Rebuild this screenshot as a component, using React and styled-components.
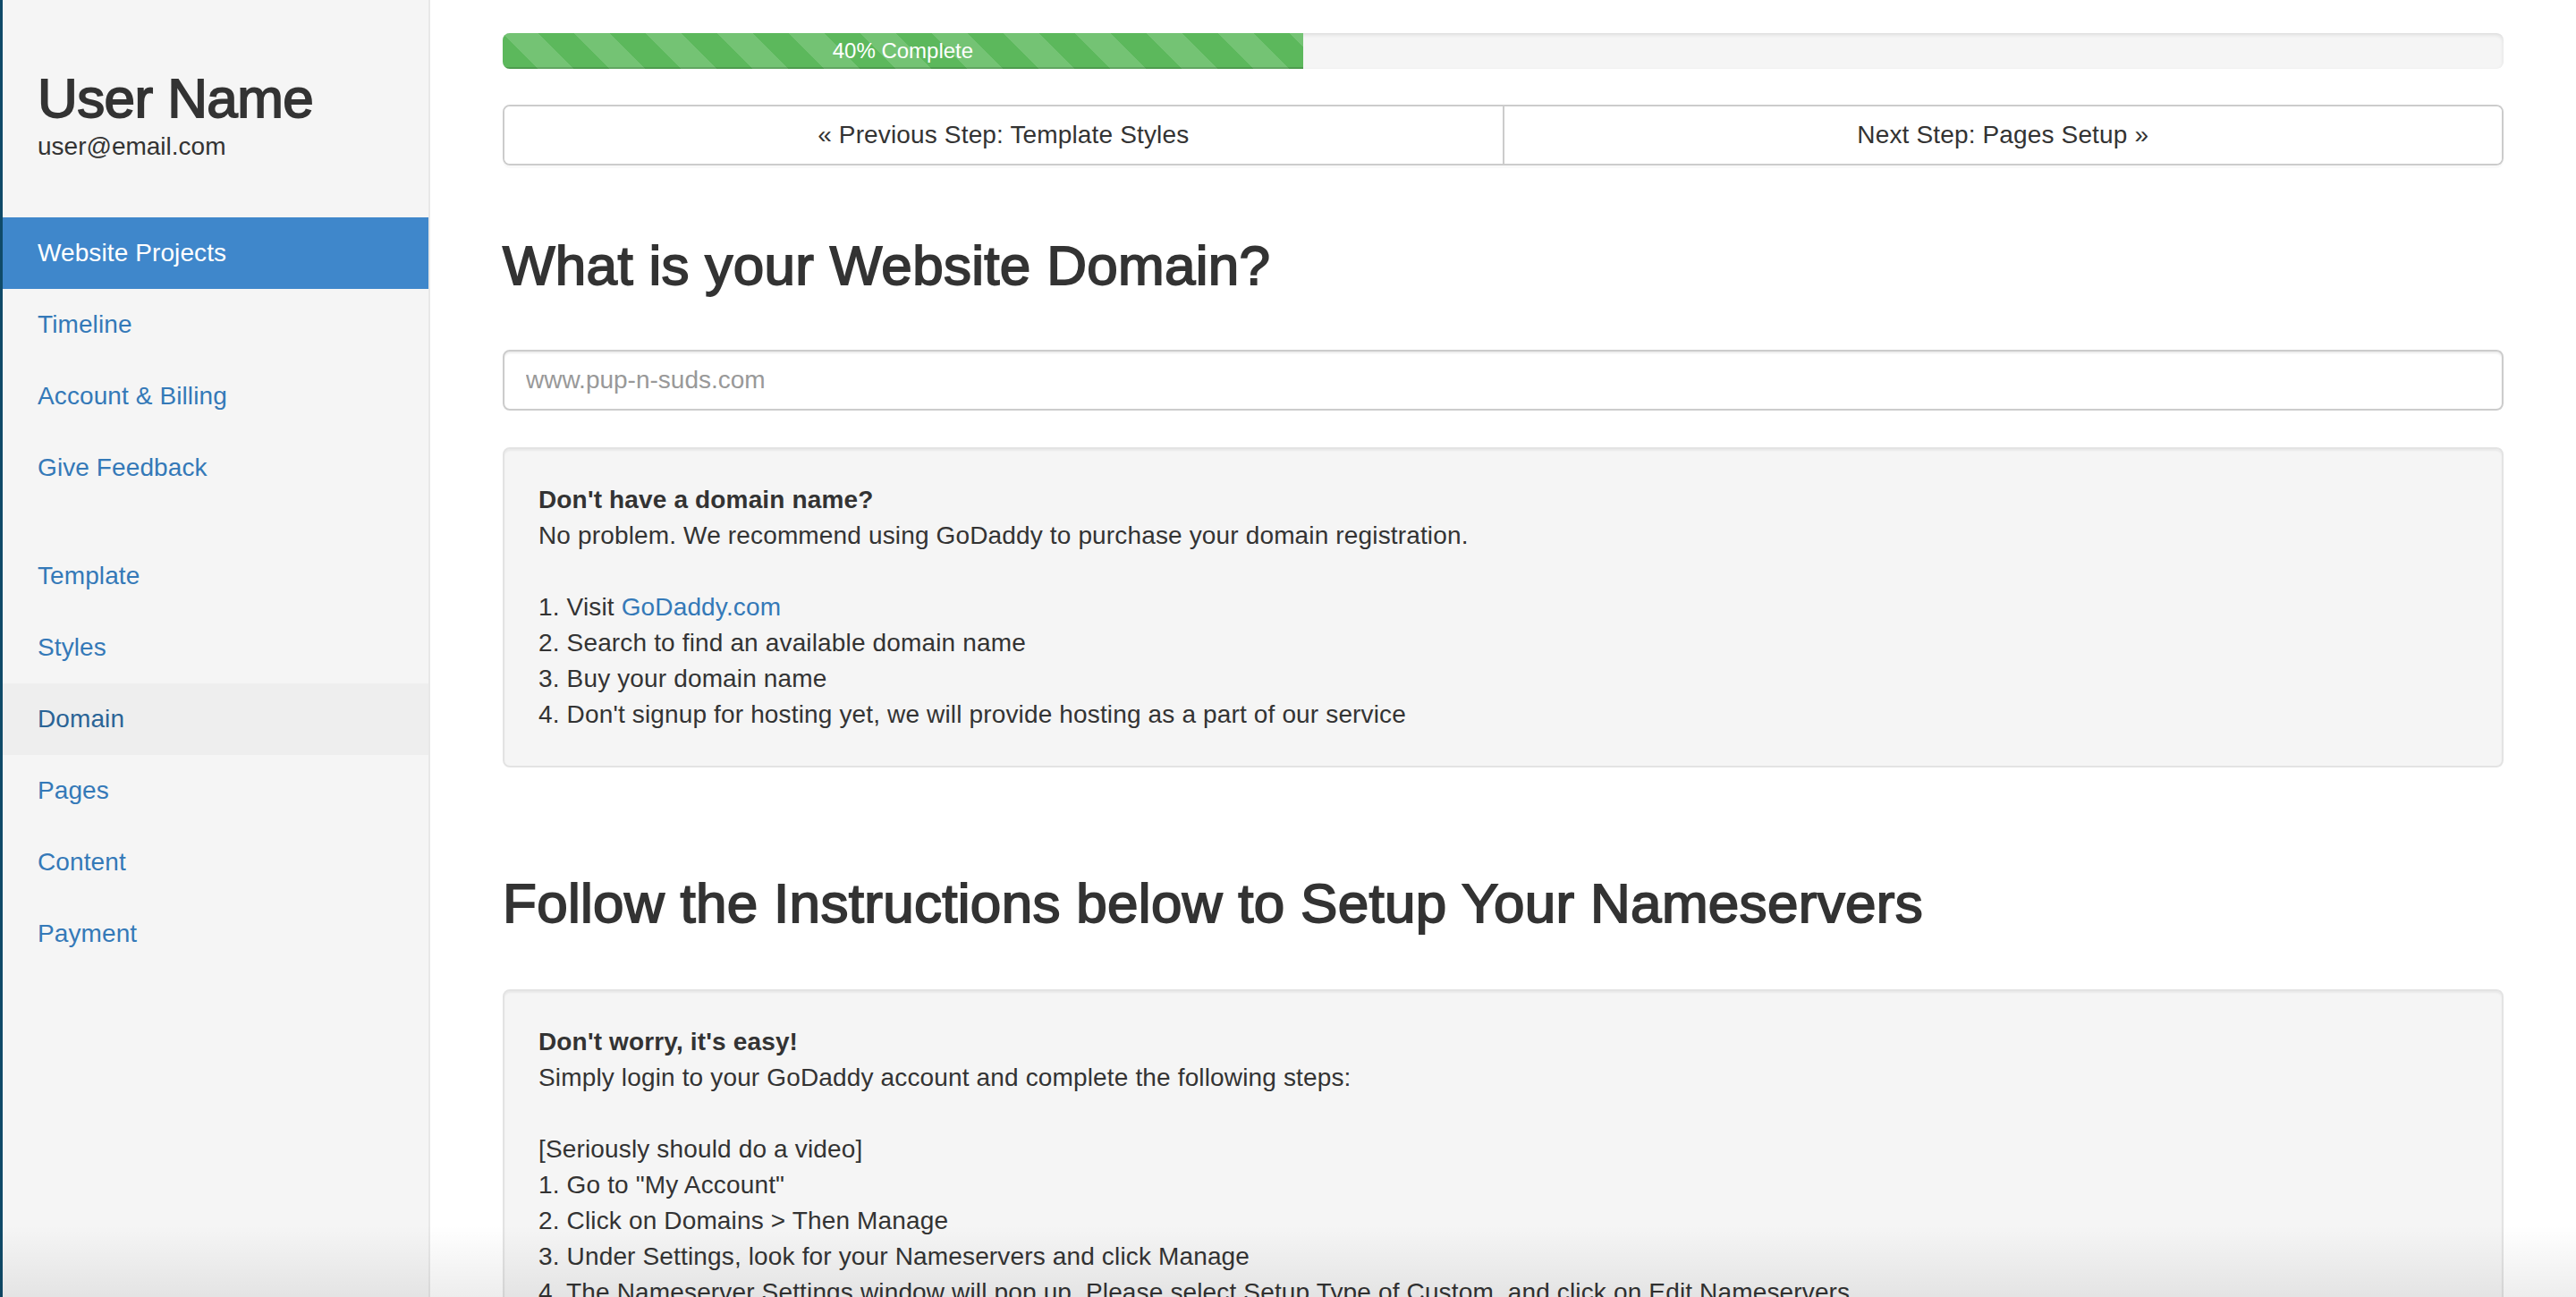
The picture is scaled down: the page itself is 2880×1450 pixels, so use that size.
import React from "react";
import styled, { createGlobalStyle } from "styled-components";

const GlobalStyle = createGlobalStyle`
  html, body { margin: 0; padding: 0; }
  body {
    font-family: "Liberation Sans", Arial, Helvetica, sans-serif;
    color: #333;
    background: #fff;
    font-size: 28px;
    line-height: 40px;
  }
  * { box-sizing: border-box; }
`;

const Page = styled.div`
  display: flex;
  height: 1450px;
  overflow: hidden;
  position: relative;
`;

const Sidebar = styled.aside`
  flex: 0 0 481px;
  width: 481px;
  background: #f5f5f5;
  border-left: 3px solid #0f4a68;
  border-right: 2px solid #e8e8e8;
  padding-top: 76px;
`;

const Profile = styled.div`
  padding-left: 39px;
  margin-bottom: 59px;
`;

const UserName = styled.h1`
  margin: 0;
  font-size: 62px;
  line-height: 68px;
  font-weight: 400;
  letter-spacing: -0.6px;
  -webkit-text-stroke: 1.8px #333;
  color: #333;
`;

const Email = styled.div`
  font-size: 28px;
  line-height: 40px;
  color: #333;
`;

const Nav = styled.nav`
  display: flex;
  flex-direction: column;
  margin-bottom: 41px;
`;

const NavItem = styled.a`
  display: block;
  height: 80px;
  line-height: 80px;
  padding-left: 39px;
  font-size: 28px;
  letter-spacing: 0.1px;
  text-decoration: none;
  color: ${(p) => (p.$active ? "#fff" : p.$hover ? "#2a6496" : "#3479b8")};
  background: ${(p) => (p.$active ? "#3f87cb" : p.$hover ? "#eeeeee" : "transparent")};
`;

const Main = styled.main`
  flex: 1;
  padding: 37px 81px 0 81px;
  min-width: 0;
  letter-spacing: 0.15px;
`;

const Progress = styled.div`
  height: 40px;
  border-radius: 8px;
  background: #f5f5f5;
  box-shadow: inset 0 2px 4px rgba(0, 0, 0, 0.1);
  overflow: hidden;
  margin-bottom: 40px;
`;

const ProgressFill = styled.div`
  height: 100%;
  background-color: #5cb85c;
  background-image: linear-gradient(
    45deg,
    rgba(255, 255, 255, 0.15) 25%,
    transparent 25%,
    transparent 50%,
    rgba(255, 255, 255, 0.15) 50%,
    rgba(255, 255, 255, 0.15) 75%,
    transparent 75%,
    transparent
  );
  background-size: 80px 80px;
  box-shadow: inset 0 -2px 0 rgba(0, 0, 0, 0.15);
  color: #fff;
  font-size: 24px;
  line-height: 40px;
  text-align: center;
  letter-spacing: 0;
`;

const StepGroup = styled.div`
  display: flex;
  border: 2px solid #ccc;
  border-radius: 8px;
  overflow: hidden;
  box-shadow: 0 3px 0 rgba(0, 0, 0, 0.025);
`;

const StepButton = styled.button`
  flex: 1;
  height: 64px;
  border: none;
  border-left: ${(p) => (p.$divider ? "2px solid #ccc" : "none")};
  background: #fff;
  color: #333;
  font-family: inherit;
  font-size: 28px;
  letter-spacing: 0.15px;
  line-height: 40px;
  padding: 0 24px;
  cursor: pointer;
`;

const Heading = styled.h2`
  margin: ${(p) => p.$top}px 0 ${(p) => p.$bottom}px;
  font-size: 62px;
  line-height: 66px;
  font-weight: 400;
  letter-spacing: 0.3px;
  -webkit-text-stroke: 1.8px #333;
  color: #333;
`;

const DomainInput = styled.input`
  display: block;
  width: 100%;
  height: 68px;
  border: 2px solid #ccc;
  border-radius: 8px;
  padding: 0 24px;
  font-family: inherit;
  font-size: 28px;
  color: #555;
  box-shadow: inset 0 2px 2px rgba(0, 0, 0, 0.075);
  outline: none;
  margin-bottom: 41px;
  &::placeholder { color: #999; }
`;

const Well = styled.div`
  background: #f5f5f5;
  border: 2px solid #e3e3e3;
  border-radius: 8px;
  padding: 37px 38px;
  box-shadow: inset 0 2px 2px rgba(0, 0, 0, 0.05);
`;

const WellTitle = styled.div`
  font-weight: 700;
  line-height: 40px;
`;

const WellText = styled.div`
  line-height: 40px;
  margin-bottom: ${(p) => (p.$gap ? "40px" : "0")};
`;

const Link = styled.a`
  color: #3479b8;
  text-decoration: none;
`;

const BottomFade = styled.div`
  position: absolute;
  left: 0;
  right: 0;
  bottom: 0;
  height: 80px;
  background: linear-gradient(to bottom, rgba(0, 0, 0, 0), rgba(0, 0, 0, 0.07));
  pointer-events: none;
`;

const primaryNav = ["Website Projects", "Timeline", "Account & Billing", "Give Feedback"];
const stepsNav = ["Template", "Styles", "Domain", "Pages", "Content", "Payment"];

export default function App() {
  const progress = 40;
  return (
    <>
      <GlobalStyle />
      <Page>
        <Sidebar>
          <Profile>
            <UserName>User Name</UserName>
            <Email>user@email.com</Email>
          </Profile>
          <Nav>
            {primaryNav.map((n, i) => (
              <NavItem key={n} href="#" $active={i === 0}>
                {n}
              </NavItem>
            ))}
          </Nav>
          <Nav>
            {stepsNav.map((n) => (
              <NavItem key={n} href="#" $hover={n === "Domain"}>
                {n}
              </NavItem>
            ))}
          </Nav>
        </Sidebar>
        <Main>
          <Progress>
            <ProgressFill style={{ width: `${progress}%` }}>40% Complete</ProgressFill>
          </Progress>
          <StepGroup>
            <StepButton>« Previous Step: Template Styles</StepButton>
            <StepButton $divider>Next Step: Pages Setup »</StepButton>
          </StepGroup>
          <Heading $top={79} $bottom={61}>What is your Website Domain?</Heading>
          <DomainInput placeholder="www.pup-n-suds.com" />
          <Well>
            <WellTitle>Don't have a domain name?</WellTitle>
            <WellText $gap>No problem. We recommend using GoDaddy to purchase your domain registration.</WellText>
            <WellText>
              1. Visit <Link href="#">GoDaddy.com</Link>
            </WellText>
            <WellText>2. Search to find an available domain name</WellText>
            <WellText>3. Buy your domain name</WellText>
            <WellText>4. Don't signup for hosting yet, we will provide hosting as a part of our service</WellText>
          </Well>
          <Heading $top={119} $bottom={63}>Follow the Instructions below to Setup Your Nameservers</Heading>
          <Well>
            <WellTitle>Don't worry, it's easy!</WellTitle>
            <WellText $gap>Simply login to your GoDaddy account and complete the following steps:</WellText>
            <WellText>[Seriously should do a video]</WellText>
            <WellText>1. Go to "My Account"</WellText>
            <WellText>2. Click on Domains &gt; Then Manage</WellText>
            <WellText>3. Under Settings, look for your Nameservers and click Manage</WellText>
            <WellText>
              4. The Nameserver Settings window will pop up. Please select Setup Type of Custom, and click on Edit Nameservers
            </WellText>
          </Well>
        </Main>
        <BottomFade />
      </Page>
    </>
  );
}
